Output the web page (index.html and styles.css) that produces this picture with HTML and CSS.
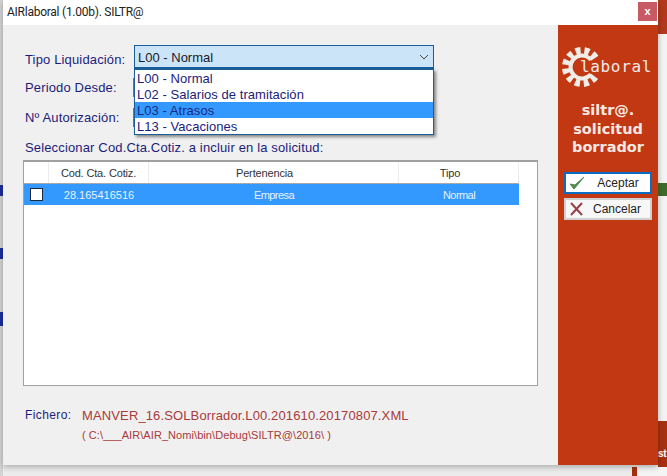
FILE: index.html
```html
<!DOCTYPE html>
<html lang="es">
<head>
<meta charset="utf-8">
<title>AIRlaboral (1.00b). SILTR@</title>
<link rel="stylesheet" href="styles.css">
</head>
<body>
<div class="desktop">
  <div class="bg bg-left"></div>
  <div class="bg bg-frag bg-frag1"></div>
  <div class="bg bg-frag bg-frag2"></div>
  <div class="bg bg-frag bg-frag3"></div>
  <div class="bg bg-top-right"></div>
  <div class="bg bg-mid-right"></div>
  <div class="bg bg-green"></div>
  <div class="bg bg-low-right"><span class="bg-st">st</span></div>
  <div class="bg bg-bottom-panel"></div>

  <div class="window">
    <header class="titlebar">
      <span class="title">AIRlaboral (1.00b). SILTR@</span>
      <button class="close" type="button">x</button>
    </header>
    <div class="content">
      <main class="main">
        <div class="row row-tipo">
          <label class="label">Tipo Liquidación:</label>
          <div class="combo-wrap">
            <div class="combo">
              <span>L00 - Normal</span>
              <svg class="chev" width="10" height="6" viewBox="0 0 10 6"><path d="M1 1l4 4 4-4" fill="none" stroke="#444" stroke-width="1"/></svg>
            </div>
            <ul class="list">
              <li>L00 - Normal</li>
              <li>L02 - Salarios de tramitación</li>
              <li class="sel">L03 - Atrasos</li>
              <li>L13 - Vacaciones</li>
            </ul>
          </div>
        </div>
        <div class="row row-periodo">
          <label class="label">Periodo Desde:</label>
          <div class="hidden-field"></div>
        </div>
        <div class="row row-auto">
          <label class="label">Nº Autorización:</label>
          <div class="hidden-field"></div>
        </div>
        <p class="label select-label">Seleccionar Cod.Cta.Cotiz. a incluir en la solicitud:</p>
        <div class="grid">
          <div class="grid-row grid-head">
            <div class="c c0"></div>
            <div class="c c1">Cod. Cta. Cotiz.</div>
            <div class="c c2">Pertenencia</div>
            <div class="c c3">Tipo</div>
          </div>
          <div class="grid-row grid-sel">
            <div class="c c0"><span class="check"></span></div>
            <div class="c c1">28.165416516</div>
            <div class="c c2">Empresa</div>
            <div class="c c3">Normal</div>
          </div>
        </div>
        <div class="file">
          <span class="file-label">Fichero:</span>
          <div class="file-info">
            <div class="file-name">MANVER_16.SOLBorrador.L00.201610.20170807.XML</div>
            <div class="file-path">( C:\___AIR\AIR_Nomi\bin\Debug\SILTR@\2016\ )</div>
          </div>
        </div>
      </main>
      <aside class="side">
        <div class="logo">
          <svg class="gear" width="44" height="44" viewBox="0 0 44 44">
            <circle cx="22" cy="22" r="15.5" fill="none" stroke="#f0ece8" stroke-width="9" stroke-dasharray="4.6 3.52 4.6 3.52 4.6 3.52 4.6 3.52 4.6 3.52 4.6 3.52 4.6 3.52 4.6 3.52 4.6 3.52 4.6 19.8" transform="rotate(36.5 22 22)"/>
            <circle cx="22" cy="22" r="11.5" fill="none" stroke="#f0ece8" stroke-width="4" stroke-dasharray="56.2 16.06" transform="rotate(40 22 22)"/>
          </svg>
          <span class="logo-text">laboral</span>
        </div>
        <h1 class="side-title">siltr@.<br>solicitud<br>borrador</h1>
        <button class="btn btn-ok" type="button">
          <svg width="20" height="18" viewBox="0 0 20 18"><path d="M2 10l4 5L16 3l-9 8z" fill="#4d8a4d" stroke="#4d8a4d" stroke-width="1"/></svg>
          <span>Aceptar</span>
        </button>
        <button class="btn btn-cancel" type="button">
          <svg width="18" height="18" viewBox="0 0 18 18"><path d="M3 3l11 12M14 3L3 15" fill="none" stroke="#96404a" stroke-width="2"/></svg>
          <span>Cancelar</span>
        </button>
      </aside>
    </div>
  </div>
</div>
</body>
</html>
```

FILE: styles.css
```css
* { box-sizing: border-box; }
html, body { margin: 0; padding: 0; }
body { width: 667px; height: 476px; overflow: hidden; font-family: "Liberation Sans", Arial, sans-serif; }

.desktop { position: relative; width: 667px; height: 476px; overflow: hidden; background: #ececec; }
.bg { position: absolute; }
.bg-left { left: 0; top: 0; width: 3px; height: 476px; background: #d4d4d4; }
.bg-frag { left: 0; width: 3px; background: #1c2f9c; }
.bg-frag1 { top: 185px; height: 11px; }
.bg-frag2 { top: 248px; height: 11px; }
.bg-frag3 { top: 312px; height: 14px; }
.bg-top-right { left: 658px; top: 0; width: 9px; height: 34px; background: #b23a1a; }
.bg-mid-right { left: 658px; top: 34px; width: 9px; height: 387px; background: #f3f3f3; }
.bg-green { left: 658px; top: 183px; width: 9px; height: 13px; background: #3f6b2a; }
.bg-low-right { left: 658px; top: 421px; width: 9px; height: 55px; background: #a8300f; overflow: hidden; }
.bg-st { position: absolute; left: 0; top: 27px; color: #fff; font-weight: 700; font-size: 10px; letter-spacing: -.3px; }
.bg-bottom-panel { left: 632px; top: 467px; width: 35px; height: 9px; background: #f4f4f4; border-left: 5px solid #a8300f; }

.window { position: absolute; left: 3px; top: 0; width: 655px; height: 465px; display: flex; flex-direction: column; background: #f0f0f0; box-shadow: 0 2px 6px rgba(0,0,0,.28); }
.titlebar { height: 25px; flex: none; background: #fff; display: flex; align-items: flex-start; justify-content: space-between; padding: 2px 1px 0 4px; }
.title { font-family: Roboto, "Liberation Sans", sans-serif; font-size: 12px; line-height: 21px; letter-spacing: -.25px; color: #222; }
.close { width: 19px; height: 19px; border: 0; padding: 0; background: #c75a64; color: #fff; font: 700 11px/17px "Liberation Sans", sans-serif; }

.content { flex: 1; display: flex; min-height: 0; }
.main { flex: 1; min-width: 0; padding: 20px 20px 0; display: flex; flex-direction: column; }
.label { font-size: 13px; letter-spacing: .15px; color: #1c1c7a; margin: 0; padding-left: 2px; }
.row { display: flex; align-items: center; }
.row .label { width: 110px; flex: none; }
.row-tipo { height: 24px; }
.row-tipo .label { position: relative; top: 2px; width: 111px; }
.row-periodo { height: 19px; margin-top: 9px; }
.row-auto { height: 19px; margin-top: 11px; }
.hidden-field { width: 301px; height: 100%; background: #fff; border: 1px solid #777; }
.combo-wrap { position: relative; width: 300px; height: 24px; z-index: 2; }
.combo { height: 24px; border: 1px solid #1a5f9c; border-bottom-width: 2px; background: #cce4f7; display: flex; align-items: center; justify-content: space-between; padding: 1px 4px 0 3px; font-size: 13px; color: #1a1a2a; }
.chev { margin-right: 0; }
.list { position: absolute; left: 0; top: 24px; width: 100%; margin: 0; padding: 0; list-style: none; background: #fff; border: 1px solid #1a5f9c; box-shadow: 2px 2px 3px rgba(0,0,0,.45); }
.list li { height: 16px; line-height: 18px; padding-left: 2px; font-size: 13px; letter-spacing: .05px; color: #1c1c7a; }
.list li.sel { background: #3399ff; color: #1c2a80; }
.select-label { margin-top: 13px; line-height: 16px; }

.grid { margin-top: 4px; width: 515px; height: 226px; background: #fff; border: 1px solid #a0a0a0; border-top: 2px solid #a0a0a0; }
.grid-row { display: flex; width: 495px; }
.c { display: flex; align-items: center; justify-content: center; font-size: 11px; flex: none; }
.c0 { width: 25px; }
.c1 { width: 100px; }
.c2 { width: 250px; }
.c3 { width: 120px; }
.grid-head { height: 22px; border-bottom: 1px solid #a8a8a8; color: #333; letter-spacing: -.15px; }
.grid-head .c { border-right: 1px solid #ececec; }
.grid-head .c2 { padding-right: 18px; }
.grid-head .c3 { padding-right: 17px; }
.grid-sel { height: 21px; background: #3399ff; color: #e8f2ff; }
.grid-sel .c2, .grid-sel .c3 { letter-spacing: -.55px; }
.check { width: 13px; height: 13px; background: #fff; border: 1px solid #1a2a40; }

.file { margin-top: 20px; display: flex; align-items: flex-start; }
.file-label { width: 59px; flex: none; font-size: 12px; line-height: 18px; color: #1c1c7a; letter-spacing: .4px; padding-left: 2px; }
.file-name { font-size: 13px; line-height: 20px; letter-spacing: .13px; color: #a83a3a; }
.file-path { font-size: 11px; line-height: 14px; margin-top: 2px; letter-spacing: .07px; color: #a83a3a; }

.side { width: 100px; flex: none; background: #c13813; display: flex; flex-direction: column; align-items: center; padding: 0 6px; }
.logo { position: relative; width: 100%; height: 62px; flex: none; }
.gear { position: absolute; left: -4px; top: 20px; }
.logo-text { position: absolute; left: 16px; top: 32px; font: 16px/20px "DejaVu Sans Mono", monospace; letter-spacing: .65px; color: #f0ece8; }
.side-title { margin: 14px 0 0; font: 700 14.5px/18.5px "DejaVu Sans", sans-serif; color: #f6e8e2; text-align: center; white-space: nowrap; }
.btn { width: 88px; flex: none; display: flex; align-items: center; background: #fff; font: 12px "Liberation Sans", sans-serif; color: #222; padding: 0 2px; }
.btn span { flex: 1; text-align: center; }
.btn-ok { height: 22px; margin-top: 15.5px; border: 2px solid #0a6cc0; }
.btn-cancel { height: 22px; margin-top: 4px; border: 2px solid #cfcfcf; background: #f7f7f7; }
```
